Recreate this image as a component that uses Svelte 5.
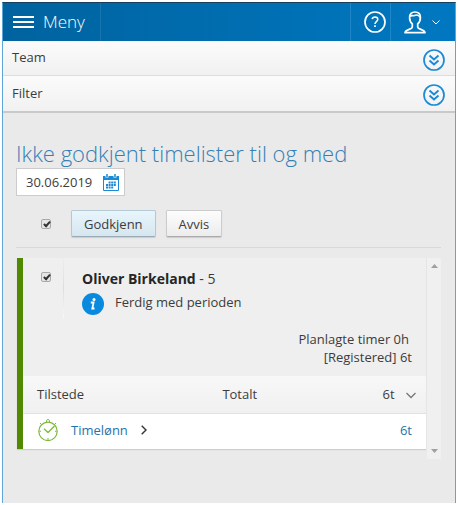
<script lang="ts">
  interface Line {
    id: number
    name: string
    hours: string
  }

  const panels = ['Team', 'Filter']
  const lines: Line[] = [{ id: 1, name: 'Timelønn', hours: '6t' }]

  let date = $state('30.06.2019')
  let allChecked = $state(true)
  let checked = $state(true)
</script>

<div class="app">
  <header class="topbar">
    <button type="button" class="menu">
      <svg width="21" height="12" viewBox="0 0 21 12" aria-hidden="true">
        <path d="M0 1h21M0 6h21M0 11h21" stroke="#fff" stroke-width="2" />
      </svg>
      Meny
    </button>
    <button type="button" class="help" aria-label="Hjelp">
      <svg width="22" height="22" viewBox="0 0 22 22" fill="none" stroke="#fff" aria-hidden="true">
        <circle cx="11" cy="11" r="10" stroke-width="1.7" />
        <path d="M8.2 8.2C8.4 6.8 9.5 6 11 6c1.7 0 2.8.9 2.8 2.3 0 2.3-2.8 2.3-2.8 4.6" stroke-width="1.5" />
        <path d="M11 14.3v1.8" stroke-width="1.7" />
      </svg>
    </button>
    <button type="button" class="user" aria-label="Bruker">
      <svg width="22" height="23" viewBox="0 0 22 23" fill="none" stroke="#fff" stroke-width="1.7" stroke-linejoin="round" aria-hidden="true">
        <path d="M8.3 13C6.4 11.300 5.600 9 5.600 6.500 5.600 3 7.600 1 11 1s5.400 2 5.400 5.500c0 2.500-.8 4.800-2.700 6.500v3c0 2.500 7 2.300 7.300 5.700H1c.3-3.400 7.300-3.200 7.300-5.700z" />
        <path d="M6 5.500C7.500 3.500 9 5.500 11.500 4.300c1.800-.8 3.300-.2 4.600 2" stroke-width="1.6" />
      </svg>
      <svg width="8" height="5" viewBox="0 0 8 5" fill="none" stroke="#fff" aria-hidden="true">
        <path d="M.5.5 4 4 7.5.5" />
      </svg>
    </button>
  </header>

  <nav class="panels">
    {#each panels as panel (panel)}
      <button type="button" class="panel">
        {panel}
        <svg width="22" height="22" viewBox="0 0 22 22" fill="none" stroke="#1a8ad6" stroke-width="1.7" aria-hidden="true">
          <circle cx="11" cy="11" r="10" />
          <path d="M6.5 6.500 11 10.500l4.500-4M6.500 11.500l4.500 4 4.500-4" stroke-width="1.9" />
        </svg>
      </button>
    {/each}
  </nav>

  <main>
    <h1><label for="date">Ikke godkjent timelister til og med</label></h1>

    <div class="date">
      <input id="date" type="text" bind:value={date} />
      <button type="button" aria-label="Velg dato">
        <svg width="16" height="17" viewBox="0 0 16 17" aria-hidden="true">
          <path d="M.5 2.500v14h15v-14" fill="#fff" stroke="#1a8ad6" />
          <path d="M0 2h2.500v1.500h3V2h5v1.500h3V2H16v4H0z" fill="#1a8ad6" />
          <path d="M4 0v3M12 0v3" stroke="#1a8ad6" stroke-width="1.5" />
          <path d="M5.600 8.500h7.600M3 11h10.200M3 13.500h7.600" stroke="#1a8ad6" stroke-width="2" stroke-dasharray="2 .6" />
        </svg>
      </button>
    </div>

    <div class="actions">
      <input type="checkbox" aria-label="Velg alle" bind:checked={allChecked} />
      <button type="button" class="btn primary">Godkjenn</button>
      <button type="button" class="btn">Avvis</button>
    </div>

    <div class="list">
      <article class="card">
        <div class="summary">
          <div class="pick">
            <input type="checkbox" aria-label="Velg Oliver Birkeland" bind:checked />
          </div>
          <div class="person">
            <h2><strong>Oliver Birkeland</strong> - 5</h2>
            <p class="status">
              <svg width="22" height="22" viewBox="0 0 22 22" aria-hidden="true">
                <circle cx="11" cy="11" r="11" fill="#0a8ade" />
                <circle cx="12" cy="6.500" r="1.500" fill="#fff" />
                <path d="M8.800 9.500h2.800L10.300 15.500h2.200" fill="none" stroke="#fff" stroke-width="1.800" />
              </svg>
              Ferdig med perioden
            </p>
          </div>
        </div>
        <div class="totals">
          <p class="planned">Planlagte timer 0h</p>
          <p>[Registered] 6t</p>
        </div>

        <table>
          <thead>
            <tr>
              <th>Tilstede</th>
              <th>Totalt</th>
              <th class="sum">
                6t
                <svg width="10" height="7" viewBox="0 0 10 7" fill="none" stroke="#777" stroke-width="1.3" aria-hidden="true">
                  <path d="M.5 1 5 5.500 9.500 1" />
                </svg>
              </th>
            </tr>
          </thead>
          <tbody>
            {#each lines as line (line.id)}
              <tr>
                <td colspan="2">
                  <a href="#timelonn">
                    <svg width="20" height="22" viewBox="0 0 20 22" fill="none" stroke="#7cb93c" aria-hidden="true">
                      <circle cx="10" cy="12.300" r="9.200" stroke-width="1.2" />
                      <path d="M8.500 3V1.500C8.500.3 11.500.3 11.500 1.500V3M3.500 5.500 2 4M16.500 5.500 18 4M10 19v2M1.500 12.300h1.500M17 12.300h1.500" />
                      <path d="M6 9.800 10 13.500l6.500-6.500" stroke-width="1.3" />
                    </svg>
                    {line.name}
                    <svg width="6" height="10" viewBox="0 0 6 10" fill="none" stroke="#333" stroke-width="1.4" aria-hidden="true">
                      <path d="M.7.7 5 5 .7 9.300" />
                    </svg>
                  </a>
                </td>
                <td class="hours">{line.hours}</td>
              </tr>
            {/each}
          </tbody>
        </table>
      </article>

      <div class="scrollbar">
        <button type="button" aria-label="Rull opp">
          <svg width="7" height="4" viewBox="0 0 7 4" aria-hidden="true"><path d="M0 4 3.500 0 7 4z" fill="#a0a0a0" /></svg>
        </button>
        <button type="button" aria-label="Rull ned">
          <svg width="7" height="4" viewBox="0 0 7 4" aria-hidden="true"><path d="M0 0l3.500 4L7 0z" fill="#a0a0a0" /></svg>
        </button>
      </div>
    </div>
  </main>
</div>

<style>
  :global(body) {
    background: #fff;
  }
  .app {
    box-sizing: border-box;
    min-height: calc(100vh - 4px);
    margin: 2px;
    border: 1px solid #5fa5d8;
    border-top-color: #173f5c;
    border-bottom: none;
    background: #eaeaea;
    color: #3c3c3c;
    font-family: 'Open Sans', 'Liberation Sans', sans-serif;
    font-size: 13px;
    line-height: 18px;
  }
  button {
    display: flex;
    align-items: center;
    margin: 0;
    padding: 0;
    border: none;
    background: none;
    color: inherit;
    font: inherit;
    cursor: pointer;
  }
  svg { flex-shrink: 0; }
  p, h1, h2 { margin: 0; font-weight: 400; }

  /* top bar */
  .topbar {
    display: flex;
    height: 38px;
    background: linear-gradient(90deg, #00639f, #0078c1);
  }
  .menu {
    gap: 9px;
    padding: 0 15px 0 10px;
    border-right: 1px solid #1975ad;
    color: #fff;
    font-size: 17px;
    font-weight: 300;
  }
  .help {
    margin-left: auto;
    padding: 0 4px 0 13px;
    border-left: 1px solid #2086c8;
    border-right: 1px solid #2086c8;
  }
  .user {
    gap: 6px;
    padding: 0 15px 0 13px;
  }

  /* collapsed panels */
  .panels { border-bottom: 2px solid #c9c9c9; }
  .panel {
    justify-content: space-between;
    width: 100%;
    height: 35px;
    padding: 0 10px 2px 9px;
    background: linear-gradient(#fbfbfb, #f1f1f1);
  }
  .panel:first-child { border-bottom: 1px solid #ddd; }
  .panel svg { margin-top: 5px; }

  main { padding: 25px 14px 43px 13px; }
  h1 {
    color: #3580b5;
    font-size: 22px;
    font-weight: 300;
    line-height: 30px;
  }

  .date {
    display: flex;
    align-items: center;
    box-sizing: border-box;
    width: 109px;
    height: 28px;
    padding: 0 5px 0 9px;
    border: 1px solid #ccc;
    background: #fff;
  }
  .date input {
    flex: 1;
    min-width: 0;
    padding: 0;
    border: none;
    outline: none;
    background: none;
    color: inherit;
    font: inherit;
  }

  input[type='checkbox'] {
    appearance: none;
    box-sizing: border-box;
    width: 10px;
    height: 10px;
    margin: 0;
    border: 1px solid #a9a9a9;
    border-radius: 2px;
    background: #e6e6e6;
  }
  input[type='checkbox']:checked::before {
    content: '';
    display: block;
    box-sizing: border-box;
    width: 4px;
    height: 7px;
    margin-left: 3px;
    border: solid #333;
    border-width: 0 2px 2px 0;
    transform: rotate(42deg);
  }

  .actions {
    display: flex;
    align-items: center;
    gap: 10px;
    padding: 14px 0 10px 25px;
    border-bottom: 1px solid #d9d9d9;
  }
  .actions input { margin-right: 10px; }
  .btn {
    height: 27px;
    padding: 0 12px;
    border: 1px solid #ccc;
    border-bottom-color: #aaa;
    border-radius: 2px;
    background: linear-gradient(#fdfdfd, #ececec);
    box-shadow: 0 1px 1px #ccc;
  }
  .primary {
    border-color: #b5c9d5;
    border-bottom-color: #98abb6;
    background: linear-gradient(#e8f5fd, #d6e6ef);
  }

  /* timesheet list */
  .list {
    display: flex;
    margin-top: 10px;
    padding-left: 1px;
  }
  .card {
    flex: 1;
    align-self: flex-start;
    border-left: 6px solid #4f8a00;
    background: #efefef;
    box-shadow: 0 1px 1px #ccc;
  }
  .summary { display: flex; }
  .pick {
    box-sizing: border-box;
    width: 41px;
    height: 60px;
    padding: 14px 0 0 18px;
    border-right: 1px solid;
    border-image: linear-gradient(#eee, #ddd, #f8f8f8) 1;
  }
  .pick input { display: block; }
  .person { padding: 11px 0 0 18px; }
  h2 { font-size: 14px; line-height: 20px; }
  strong { color: #262626; }
  .status {
    display: flex;
    gap: 11px;
    margin-top: 4px;
  }
  .totals {
    padding: 12px 14px 10px;
    text-align: right;
  }
  .planned { padding-right: 3px; }

  table {
    width: 100%;
    border-collapse: collapse;
    table-layout: fixed;
  }
  th, td {
    box-sizing: border-box;
    height: 36px;
    padding: 0 0 0 14px;
    text-align: left;
    font-weight: 400;
  }
  thead { background: linear-gradient(#f8f8f8, #f0f0f0); }
  th:first-child { width: 46%; }
  th { height: 37px; border-bottom: 1px solid #e2e2e2; }
  .sum {
    padding-right: 10px;
    text-align: right;
  }
  .sum svg { margin-left: 8px; }
  tbody { background: #fff; }
  td { padding: 0 14px 2px 15px; }
  td a {
    display: flex;
    align-items: center;
    gap: 13px;
    color: #1f73ae;
    text-decoration: none;
  }
  .hours {
    color: #1f73ae;
    text-align: right;
  }

  .scrollbar {
    display: flex;
    flex-direction: column;
    justify-content: space-between;
    width: 14px;
    min-height: 201px;
    margin-left: 1px;
    background: #f0f0f0;
  }
  .scrollbar button {
    justify-content: center;
    height: 16px;
  }
</style>
